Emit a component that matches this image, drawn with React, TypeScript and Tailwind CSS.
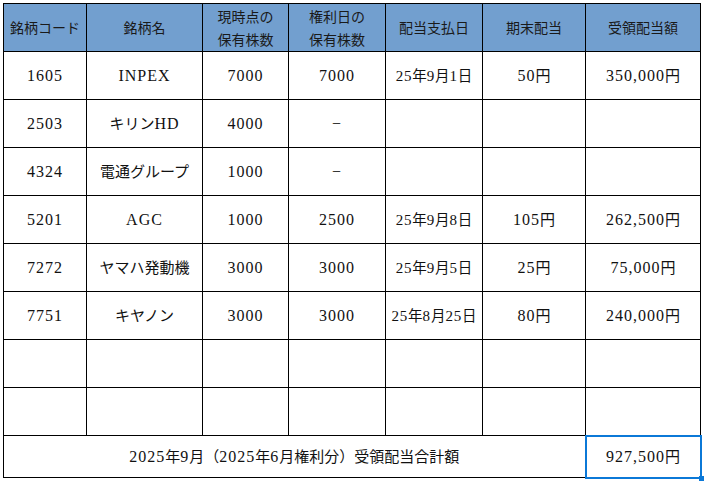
const rows = [
  { code: '1605', name: 'INPEX', now: '7000', record: '7000', pay: '25年9月1日', div: '50円', amount: '350,000円' },
  { code: '2503', name: 'キリンHD', now: '4000', record: '−', pay: '', div: '', amount: '' },
  { code: '4324', name: '電通グループ', now: '1000', record: '−', pay: '', div: '', amount: '' },
  { code: '5201', name: 'AGC', now: '1000', record: '2500', pay: '25年9月8日', div: '105円', amount: '262,500円' },
  { code: '7272', name: 'ヤマハ発動機', now: '3000', record: '3000', pay: '25年9月5日', div: '25円', amount: '75,000円' },
  { code: '7751', name: 'キヤノン', now: '3000', record: '3000', pay: '25年8月25日', div: '80円', amount: '240,000円' },
  { code: '', name: '', now: '', record: '', pay: '', div: '', amount: '' },
  { code: '', name: '', now: '', record: '', pay: '', div: '', amount: '' },
]

// latin runs in a wide serif, japanese runs slightly smaller
function Mix({ text, small }: { text: string; small?: boolean }) {
  const parts = text.split(/([\x20-\x7e−]+)/).filter((p) => p !== '')
  return (
    <>
      {parts.map((p, i) =>
        /^[\x20-\x7e−]+$/.test(p) ? (
          <span key={i} className={small ? 'text-[15px] tracking-[0.8px]' : 'text-[16px] tracking-[1px]'}>
            {p}
          </span>
        ) : (
          <span key={i} className={small ? 'text-[14.5px]' : 'text-[15px]'}>
            {p}
          </span>
        )
      )}
    </>
  )
}

const th = 'border border-black bg-[#729fcf] p-0 text-center align-middle font-normal text-[14px] leading-[23px] text-[#1a1a1a]'
const td = 'border border-black p-0 text-center align-middle text-[#111] leading-none'

export default function App() {
  return (
    <div className="h-[483px] w-[706px] bg-white pl-[3px] pt-[3px]">
      <table className="table-fixed border-collapse font-['Liberation_Serif','Noto_Sans_CJK_JP',serif]">
        <colgroup>
          <col className="w-[83px]" />
          <col className="w-[116px]" />
          <col className="w-[86px]" />
          <col className="w-[97px]" />
          <col className="w-[97px]" />
          <col className="w-[103px]" />
          <col className="w-[115px]" />
        </colgroup>
        <thead className="font-['Noto_Sans_CJK_JP',sans-serif]">
          <tr className="h-[48px]">
            <th className={th}>銘柄コード</th>
            <th className={th}>銘柄名</th>
            <th className={th}>現時点の<br />保有株数</th>
            <th className={th}>権利日の<br />保有株数</th>
            <th className={th}>配当支払日</th>
            <th className={th}>期末配当</th>
            <th className={th}>受領配当額</th>
          </tr>
        </thead>
        <tbody>
          {rows.map((r, i) => (
            <tr key={i} className="h-[48px]">
              <td className={td}><Mix text={r.code} /></td>
              <td className={td}><Mix text={r.name} /></td>
              <td className={td}><Mix text={r.now} /></td>
              <td className={td}><Mix text={r.record} /></td>
              <td className={td}><Mix text={r.pay} small /></td>
              <td className={td}><Mix text={r.div} /></td>
              <td className={td}><Mix text={r.amount} /></td>
            </tr>
          ))}
          <tr className="h-[42px]">
            <td colSpan={6} className={td}>
              <Mix text="2025年9月（2025年6月権利分）受領配当合計額" />
            </td>
            <td className="relative border-2 border-[#0b78d7] p-0 text-center align-middle leading-none text-[#111]">
              <Mix text="927,500円" />
              <span className="absolute -bottom-[4px] -right-[4px] h-[5px] w-[5px] bg-[#0b78d7]" />
            </td>
          </tr>
        </tbody>
      </table>
    </div>
  )
}
